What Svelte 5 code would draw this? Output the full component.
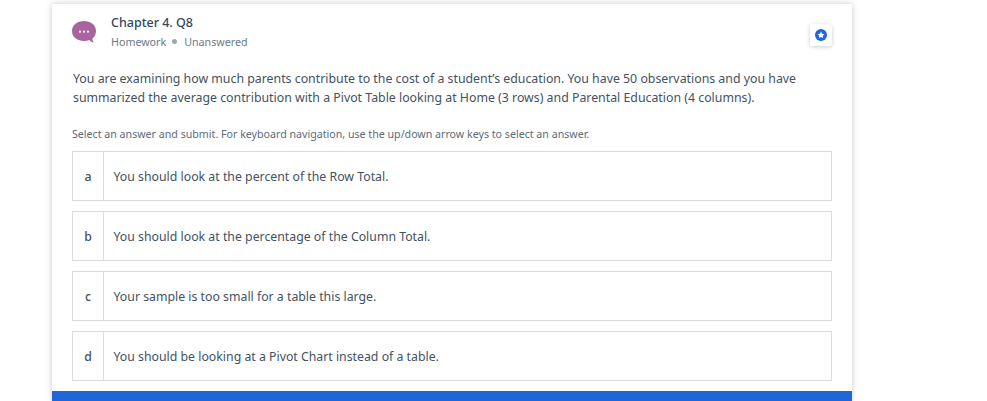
<script>
  const answers = [
    ['a', 'You should look at the percent of the Row Total.'],
    ['b', 'You should look at the percentage of the Column Total.'],
    ['c', 'Your sample is too small for a table this large.'],
    ['d', 'You should be looking at a Pivot Chart instead of a table.']
  ];
</script>

<div class="page">
  <main class="card">
    <header class="head">
      <svg class="bubble" width="24" height="23" viewBox="0 0 24 23" aria-hidden="true">
        <path d="M12 0C5.500 0 0 3.800 0 10s5.500 10 12 10c2 0 3.800-.3 5.400-.9 1.100 1.300 2.500 2.400 4.600 2.700-.9-1-1.500-2.400-1.700-4 2.300-1.800 3.700-4.500 3.700-7.800C24 3.800 18.500 0 12 0z" fill="#a9639e"/>
        <circle cx="8" cy="10.700" r="1.100" fill="#fff"/><circle cx="12" cy="10.700" r="1.100" fill="#fff"/><circle cx="16" cy="10.700" r="1.100" fill="#fff"/>
      </svg>
      <div class="titles">
        <h1>Chapter 4. Q8</h1>
        <p class="meta"><span>Homework</span><i class="dot"></i><span>Unanswered</span></p>
      </div>
      <button class="flag" aria-label="Flag question">
        <svg width="12" height="12" viewBox="0 0 12 12" aria-hidden="true">
          <circle cx="6" cy="6" r="6" fill="#1f66d8"/>
          <path d="M6 2.500l1.050 2.200 2.400.3-1.750 1.650.45 2.400L6 7.900 3.850 9.050l.45-2.400L2.550 5l2.400-.3z" fill="#fff"/>
        </svg>
      </button>
    </header>
    <p class="question">You are examining how much parents contribute to the cost of a student’s education. You have 50 observations and you have summarized the average contribution with a Pivot Table looking at Home (3 rows) and Parental Education (4 columns).</p>
    <p class="hint">Select an answer and submit. For keyboard navigation, use the up/down arrow keys to select an answer.</p>
    <ul class="answers">
      {#each answers as [letter, text]}
        <li class="answer"><span class="letter">{letter}</span><span class="text">{text}</span></li>
      {/each}
    </ul>
    <div class="bar"></div>
  </main>
</div>

<style>
  :global(body) { margin: 0; background: #fff; overflow: hidden; }
  .page { padding: 4px 0 0 52px; font-family: "Noto Sans", "Open Sans", sans-serif; color: #43525f; }
  .card { width: 800px; height: 397px; background: #fff; box-shadow: 0 0 6px rgba(0,0,0,.22); display: flex; flex-direction: column; }
  .head { display: flex; align-items: flex-start; padding: 11px 20px 0 20px; height: 49px; box-sizing: border-box; }
  .bubble { margin: 6px 15px 0 0; }
  .titles { flex: 1; }
  h1 { margin: 0; font-size: 12.500px; line-height: 16px; font-weight: 500; color: #33475b; }
  .meta { margin: 4px 0 0; display: flex; align-items: center; font-size: 10.700px; line-height: 14px; color: #6b7a89; }
  .dot { width: 5px; height: 5px; border-radius: 50%; background: #9aa8b5; margin: 0 7px 2px 6px; }
  .flag { width: 22px; height: 22px; padding: 0; margin-top: 9px; border: 0; border-radius: 2px; background: #fff; box-shadow: 0 1px 4px rgba(0,0,0,.2); display: flex; align-items: center; justify-content: center; }
  .question { margin: 16px 20px 0 21px; font-size: 12.330px; line-height: 19px; }
  .hint { margin: 20px 0 0 20px; font-size: 10.650px; line-height: 14px; color: #5b6b7a; }
  .answers { list-style: none; margin: 10px 20px 0; padding: 0; display: flex; flex-direction: column; gap: 10px; }
  .answer { display: flex; height: 50px; box-sizing: border-box; border: 1px solid #d9dce1; align-items: stretch; font-size: 12.300px; }
  .letter { width: 30px; flex: none; border-right: 1px solid #d9dce1; display: flex; align-items: center; justify-content: center; font-weight: 500; }
  .text { padding-left: 9.500px; display: flex; align-items: center; }
  .bar { margin-top: auto; height: 10px; background: #1f66d8; }
</style>
